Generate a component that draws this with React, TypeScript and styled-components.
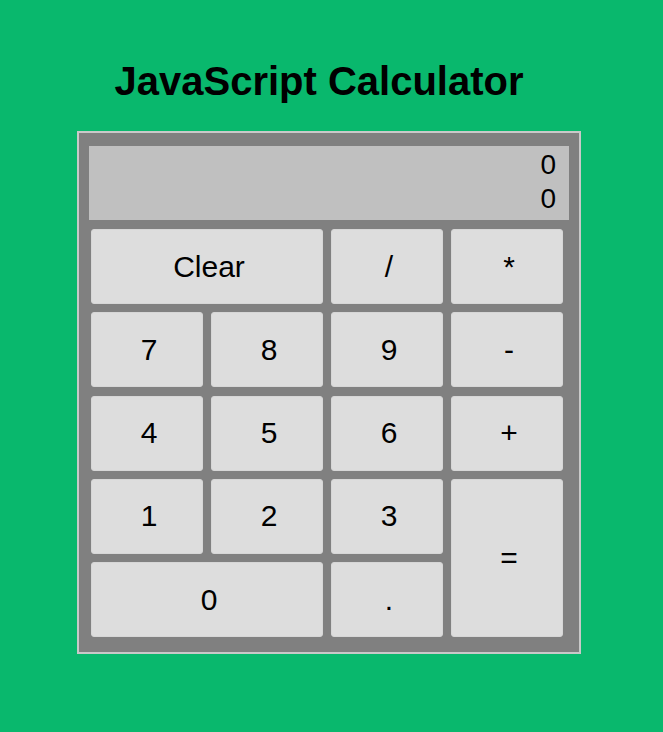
import React from "react";
import styled, { createGlobalStyle } from "styled-components";

const Global = createGlobalStyle`
  html, body { margin: 0; padding: 0; }
  body {
    background: #09b86d;
    font-family: "Liberation Sans", Arial, sans-serif;
    width: 663px;
    height: 732px;
  }
`;

const Page = styled.div`
  display: flex;
  flex-direction: column;
  padding: 58px 0 0 77px;
`;

const Title = styled.h1`
  margin: 0 0 27px 0;
  width: 504px;
  padding-right: 20px;
  box-sizing: border-box;
  text-align: center;
  font-size: 40px;
  line-height: 46px;
  font-weight: bold;
  color: #000;
`;

const Frame = styled.div`
  width: 504px;
  box-sizing: border-box;
  border: 2px solid #c9c9c9;
  background: #808080;
  padding: 13px 10px 15px 10px;
  display: flex;
  flex-direction: column;
  gap: 9px;
`;

const Display = styled.div`
  background: #c0c0c0;
  height: 74px;
  box-sizing: border-box;
  padding: 2px 13px 0 0;
  text-align: right;
  font-size: 28px;
  line-height: 34px;
  color: #000;
`;

const Keys = styled.div`
  display: grid;
  grid-template-columns: repeat(4, 112px);
  grid-template-rows: repeat(5, 75px);
  column-gap: 8px;
  row-gap: 8.3px;
  padding-left: 2px;
`;

const Key = styled.button<{ $col?: string; $row?: string }>`
  grid-column: ${(p) => p.$col ?? "auto"};
  grid-row: ${(p) => p.$row ?? "auto"};
  background: #dddddd;
  border: 1px solid #d6d6d6;
  border-radius: 3px;
  font-family: "Liberation Sans", Arial, sans-serif;
  font-size: 30px;
  color: #000;
  padding: 0 0 0 4px;
  margin: 0;
  display: flex;
  align-items: center;
  justify-content: center;
`;

export default function App() {
  return (
    <>
      <Global />
      <Page>
        <Title>JavaScript Calculator</Title>
        <Frame>
          <Display>
            <div>0</div>
            <div>0</div>
          </Display>
          <Keys>
            <Key $col="1 / span 2">Clear</Key>
            <Key>/</Key>
            <Key>*</Key>
            <Key>7</Key>
            <Key>8</Key>
            <Key>9</Key>
            <Key>-</Key>
            <Key>4</Key>
            <Key>5</Key>
            <Key>6</Key>
            <Key>+</Key>
            <Key>1</Key>
            <Key>2</Key>
            <Key>3</Key>
            <Key $col="4" $row="4 / span 2">=</Key>
            <Key $col="1 / span 2">0</Key>
            <Key>.</Key>
          </Keys>
        </Frame>
      </Page>
    </>
  );
}
